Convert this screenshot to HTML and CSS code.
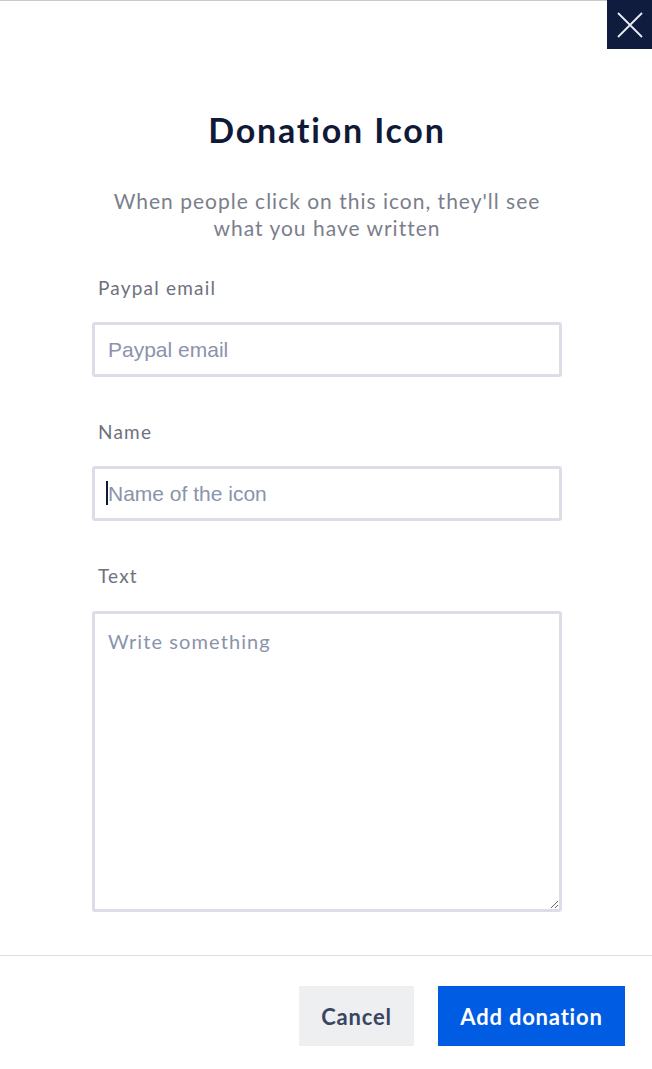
FILE: index.html
```html
<!doctype html>
<html lang="en">
<head>
  <meta charset="UTF-8">
  <title>Donation Icon</title>
  <link rel="stylesheet" href="styles.css">
</head>
<body>
  <div class="modal">
    <button class="close" type="button" aria-label="Close">
      <svg width="26" height="26" viewBox="0 0 26 26"><path d="M1 1L25 25M25 1L1 25" stroke="#e9ecf3" stroke-width="1.8" fill="none"/></svg>
    </button>
    <div class="body">
      <h1 class="title">Donation Icon</h1>
      <p class="lead">When people click on this icon, they'll see<br>what you have written</p>
      <form class="form">
        <label class="field">
          <span class="label">Paypal email</span>
          <input class="input" type="text" placeholder="Paypal email">
        </label>
        <label class="field">
          <span class="label">Name</span>
          <span class="input-wrap">
            <input class="input" type="text" placeholder="Name of the icon">
            <span class="caret"></span>
          </span>
        </label>
        <label class="field field-text">
          <span class="label">Text</span>
          <textarea class="textarea" placeholder="Write something"></textarea>
        </label>
      </form>
    </div>
    <div class="footer">
      <button class="btn btn-cancel" type="button">Cancel</button>
      <button class="btn btn-add" type="button">Add donation</button>
    </div>
  </div>
</body>
</html>
```

FILE: styles.css
```css
* { margin: 0; padding: 0; box-sizing: border-box; }
body { background: #fff; font-family: Lato, "Noto Sans", sans-serif; }
.modal { position: relative; width: 652px; min-height: 1069px; border-top: 1px solid #c9c9cc; }
.close { position: absolute; top: -1px; right: 0; width: 45px; height: 49px; background: #0f1c3d; border: 0; display: flex; align-items: center; justify-content: center; cursor: pointer; }
.body { display: flex; flex-direction: column; align-items: center; padding: 109px 0 0 2px; }
.title { font-size: 34px; line-height: 40px; font-weight: 700; color: #101a38; letter-spacing: 1.8px; }
.lead { margin-top: 37px; font-size: 21px; line-height: 27px; color: #7b7e8c; text-align: center; letter-spacing: 1px; }
.form { width: 470px; margin-top: 35px; display: flex; flex-direction: column; gap: 43px; }
.field { display: flex; flex-direction: column; }
.field-text .label { margin-bottom: 23px; }
.label { padding-left: 6px; font-size: 19px; line-height: 24px; color: #6e717e; letter-spacing: 1.2px; margin-bottom: 22px; }
.input-wrap { position: relative; display: flex; flex-direction: column; }
.input { height: 55px; border: 3px solid #dcdde7; border-radius: 3px; padding: 0 13px; font-family: "Liberation Sans", Arial, sans-serif; font-size: 21px; color: #101a38; outline: none; }
.caret { position: absolute; left: 14px; top: 15px; width: 2px; height: 24px; background: #101a38; }
.input::placeholder, .textarea::placeholder { color: #8a93ab; opacity: 1; }
.textarea { height: 301px; border: 3px solid #dcdde7; border-radius: 3px; padding: 14px 13px; font-family: Lato, "Noto Sans", sans-serif; font-size: 20px; letter-spacing: 1.1px; line-height: 26px; color: #101a38; resize: vertical; outline: none; }
.footer { margin-top: 43px; border-top: 1px solid #dcdde3; padding: 30px 27px 0 0; display: flex; justify-content: flex-end; gap: 24px; }
.btn { height: 60px; border: 0; font-family: Lato, "Noto Sans", sans-serif; font-size: 22px; font-weight: 700; letter-spacing: 0.8px; cursor: pointer; }
.btn-cancel { width: 115px; background: #eeeff1; color: #3a4562; }
.btn-add { width: 187px; background: #005ce3; color: #fff; }
```
